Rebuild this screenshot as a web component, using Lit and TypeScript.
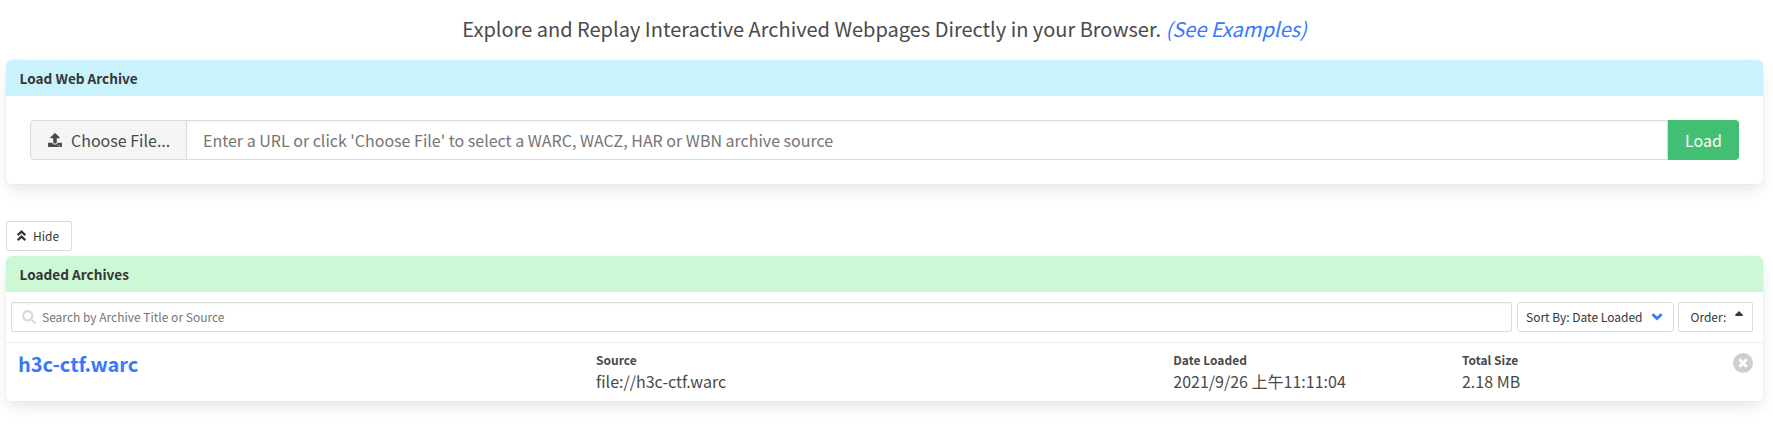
import { LitElement, html, css } from "lit";
import { customElement } from "lit/decorators.js";

@customElement("app-root")
export class AppRoot extends LitElement {
  static styles = css`
    :host {
      display: block;
      height: 432px;
      box-sizing: border-box;
      background: #fff;
      color: #4a4a4a;
      font: 400 16px/24px "Noto Sans CJK SC", "Noto Sans", sans-serif;
      padding: 14px 10px 0 6px;
      overflow: hidden;
    }
    * { box-sizing: border-box; }
    svg { display: block; flex: none; }
    .intro { margin: 0 0 16px; text-align: center; font-size: 20px; line-height: 30px; }
    a { color: #3878ff; text-decoration: none; }
    .panel {
      border-radius: 6px;
      box-shadow: 0 8px 16px -2px rgba(10, 10, 10, .1), 0 0 0 1px rgba(10, 10, 10, .02);
    }
    .heading {
      height: 36px;
      padding: 0 13.6px;
      border-radius: 6px 6px 0 0;
      font-size: 13.6px;
      line-height: 37px;
      font-weight: 700;
      color: #363636;
    }
    .cyan { background: #c9f2fd; }
    .green { background: #cdf8d6; }
    .load { display: flex; padding: 24px; }
    .choose, .url, .go { height: 40px; display: flex; align-items: center; padding-bottom: 1px; }
    .choose {
      width: 157px;
      padding-left: 17px;
      gap: 9px;
      background: #f5f5f5;
      border: 1px solid #dbdbdb;
      border-radius: 4px 0 0 4px;
    }
    .url {
      flex: 1;
      padding-left: 16px;
      border: solid #dbdbdb;
      border-width: 1px 1px 1px 0;
      color: #757575;
      box-shadow: inset 0 1px 2px rgba(10, 10, 10, .05);
    }
    .go { width: 71px; justify-content: center; background: #43bf73; color: #fff; border-radius: 0 4px 4px 0; }
    .small {
      height: 30px;
      display: flex;
      align-items: center;
      border: 1px solid #dbdbdb;
      border-radius: 2px;
      font-size: 12px;
      color: #363636;
    }
    .hide { width: 66px; padding-left: 10px; gap: 7px; margin: 37px 0 5px; }
    .hide svg { margin-bottom: 1px; }
    .tools { display: flex; padding: 10px 10px 10px 5px; height: 50px; }
    .search {
      flex: 1;
      padding-left: 10px;
      gap: 6px;
      color: #757575;
      box-shadow: inset 0 1px 2px rgba(10, 10, 10, .05);
    }
    .search svg { margin-bottom: 1px; }
    .sort { width: 157px; margin: 0 4px 0 5px; padding: 0 10px 0 8px; justify-content: space-between; border-radius: 4px; }
    .order { width: 75px; padding-left: 11.5px; gap: 8.5px; }
    .order svg { margin-bottom: 8px; }
    .row { display: flex; height: 59px; border-top: 1px solid #ededed; padding: 10px 10px 0 12px; }
    .cells { flex: 1; display: grid; grid-template-columns: 578px 577.3px 288.7px 1fr; margin-top: -2px; }
    .title { font-size: 20px; line-height: 26px; font-weight: 700; }
    .label { font-size: 12px; line-height: 17px; font-weight: 700; }
    .value { line-height: 26px; }
  `;

  private field(label: string, value: string) {
    return html`<div><div class="label">${label}</div><div class="value">${value}</div></div>`;
  }

  render() {
    return html`
      <p class="intro">Explore and Replay Interactive Archived Webpages Directly in your Browser. <a href="#"><i>(See Examples)</i></a></p>
      <section class="panel">
        <div class="heading cyan">Load Web Archive</div>
        <div class="load">
          <div class="choose">
            <svg width="14" height="14" viewBox="0 0 512 512" fill="#4a4a4a"><path d="M296 384h-80c-13.300 0-24-10.700-24-24V192h-87.700c-17.800 0-26.700-21.500-14.100-34.100L242.300 5.700c7.500-7.500 19.800-7.500 27.300 0l152.200 152.200c12.600 12.600 3.700 34.100-14.100 34.100H320v168c0 13.300-10.700 24-24 24zm216-8v112c0 13.300-10.700 24-24 24H24c-13.300 0-24-10.700-24-24V376c0-13.300 10.700-24 24-24h136v8c0 30.900 25.100 56 56 56h80c30.900 0 56-25.100 56-56v-8h136c13.300 0 24 10.700 24 24zm-124 88c0-11-9-20-20-20s-20 9-20 20 9 20 20 20 20-9 20-20zm64 0c0-11-9-20-20-20s-20 9-20 20 9 20 20 20 20-9 20-20z"/></svg>
            <span>Choose File...</span>
          </div>
          <div class="url">Enter a URL or click 'Choose File' to select a WARC, WACZ, HAR or WBN archive source</div>
          <div class="go">Load</div>
        </div>
      </section>
      <div class="small hide">
        <svg width="9" height="11" viewBox="0 0 9 11" fill="none" stroke="#363636" stroke-width="2.200"><path d="M.7 5.200 4.500 1.600l3.800 3.600M.7 10.200l3.800-3.600 3.800 3.600"/></svg>
        <span>Hide</span>
      </div>
      <section class="panel">
        <div class="heading green">Loaded Archives</div>
        <div class="tools">
          <div class="small search">
            <svg width="14" height="14" viewBox="0 0 512 512" fill="#dbdbdb"><path d="M505 442.700L405.300 343c-4.500-4.500-10.600-7-17-7H372c27.600-35.300 44-79.700 44-128C416 93.100 322.900 0 208 0S0 93.100 0 208s93.100 208 208 208c48.300 0 92.700-16.400 128-44v16.300c0 6.400 2.500 12.500 7 17l99.700 99.700c9.400 9.400 24.600 9.400 33.900 0l28.300-28.300c9.400-9.400 9.400-24.600.1-34zM208 336c-70.700 0-128-57.200-128-128 0-70.700 57.200-128 128-128 70.700 0 128 57.200 128 128 0 70.700-57.200 128-128 128z"/></svg>
            <span>Search by Archive Title or Source</span>
          </div>
          <div class="small sort">
            <span>Sort By: Date Loaded</span>
            <svg width="12" height="8" viewBox="0 0 12 8" fill="none" stroke="#3878ff" stroke-width="2.800"><path d="M1.500 1.200 6 5.600l4.500-4.400"/></svg>
          </div>
          <div class="small order">
            <span>Order:</span>
            <svg width="8" height="5" viewBox="0 0 8 5" fill="#363636"><path d="M4 0 7.800 3.800Q8 5 7 5H1Q0 5 .2 3.800Z"/></svg>
          </div>
        </div>
        <div class="row">
          <div class="cells">
            <a class="title" href="#">h3c-ctf.warc</a>
            ${this.field("Source", "file://h3c-ctf.warc")}
            ${this.field("Date Loaded", "2021/9/26 上午11:11:04")}
            ${this.field("Total Size", "2.18 MB")}
          </div>
          <svg width="20" height="20" viewBox="0 0 20 20"><circle cx="10" cy="10" r="10" fill="#cecece"/><path d="m6.300 6.300 7.400 7.400m0-7.400-7.400 7.400" stroke="#fff" stroke-width="2.700"/></svg>
        </div>
      </section>
    `;
  }
}
